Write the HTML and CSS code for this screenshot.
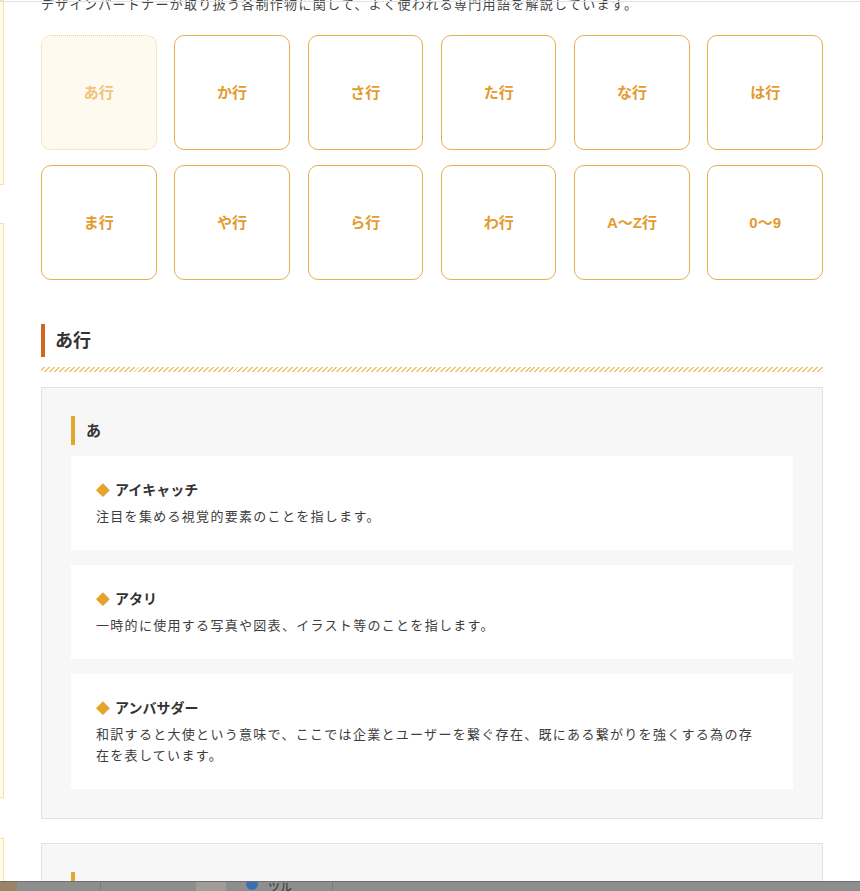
FILE: index.html
```html
<!DOCTYPE html>
<html lang="ja">
<head>
    <meta charset="utf-8">
    <link rel="stylesheet" href="styles.css">
</head>
<body>
    <div class="topline"></div>

    <div class="layout">
        <aside class="side">
            <div class="side-box side-box-1"></div>
            <div class="side-box side-box-2"></div>
            <div class="side-box side-box-3"></div>
        </aside>

        <main class="main">
            <p class="intro">デザインパートナーが取り扱う各制作物に関して、よく使われる専門用語を解説しています。</p>

            <!-- 行ナビ -->
            <nav class="kana-nav">
                <a class="kana-btn current">あ行</a>
                <a class="kana-btn">か行</a>
                <a class="kana-btn">さ行</a>
                <a class="kana-btn">た行</a>
                <a class="kana-btn">な行</a>
                <a class="kana-btn">は行</a>
                <a class="kana-btn">ま行</a>
                <a class="kana-btn">や行</a>
                <a class="kana-btn">ら行</a>
                <a class="kana-btn">わ行</a>
                <a class="kana-btn">A〜Z行</a>
                <a class="kana-btn">0〜9</a>
            </nav>

            <h2 class="row-title">あ行</h2>
            <div class="stripe"></div>

            <section class="term-group">
                <h3 class="group-title">あ</h3>

                <div class="term">
                    <h4 class="term-name"><span class="diamond">◆</span>アイキャッチ</h4>
                    <p class="term-desc">注目を集める視覚的要素のことを指します。</p>
                </div>

                <div class="term">
                    <h4 class="term-name"><span class="diamond">◆</span>アタリ</h4>
                    <p class="term-desc">一時的に使用する写真や図表、イラスト等のことを指します。</p>
                </div>

                <div class="term">
                    <h4 class="term-name"><span class="diamond">◆</span>アンバサダー</h4>
                    <p class="term-desc">和訳すると大使という意味で、ここでは企業とユーザーを繋ぐ存在、既にある繋がりを強くする為の存在を表しています。</p>
                </div>
            </section>

            <section class="term-group">
                <h3 class="group-title">い</h3>
            </section>
        </main>
    </div>

    <!-- 画面下の固定バー -->
    <div class="dock">
        <div class="dock-thumb"></div>
        <div class="dock-item"></div>
        <div class="dock-photo"></div>
        <div class="dock-label"><span class="dock-dot"></span>ツル</div>
        <div class="dock-item wide"></div>
    </div>
</body>
</html>
```

FILE: styles.css
```css
body {
    margin: 0;
    background: #fff;
    color: #444;
    font-family: "Liberation Sans", "Noto Sans CJK JP", sans-serif;
    overflow: hidden;
}

.topline {
    position: fixed;
    top: 1px;
    left: 0;
    right: 0;
    height: 1px;
    background: #e2e2e2;
    z-index: 5;
}

.layout {
    display: flex;
}

.side {
    width: 4px;
    flex-shrink: 0;
    display: flex;
    flex-direction: column;
}

.side-box {
    box-sizing: border-box;
    width: 4px;
    background: #fffbea;
    border: 1px solid #f4e3a6;
    border-left: none;
}

.side-box-1 { height: 185px; }
.side-box-2 { height: 575px; margin-top: 38px; }
.side-box-3 { height: 60px; margin-top: 40px; }

.main {
    width: 782px;
    margin-left: 37px;
    margin-top: -6px;
}

.intro {
    margin: 0;
    font-size: 13px;
    letter-spacing: 0.1em;
    line-height: 21px;
    color: #444;
}

.kana-nav {
    display: grid;
    grid-template-columns: repeat(6, 1fr);
    column-gap: 17.6px;
    row-gap: 15px;
    margin-top: 20px;
}

.kana-btn {
    box-sizing: border-box;
    height: 115px;
    padding-bottom: 3px;
    display: flex;
    align-items: center;
    justify-content: center;
    border: 1px solid #e8b04a;
    border-radius: 10px;
    background: #fff;
    color: #e39b2f;
    font-size: 15px;
    font-weight: bold;
    text-decoration: none;
}

.kana-btn.current {
    border: 1px dotted #f0cf8c;
    background: #fffaef;
    color: #f0c47c;
}

.row-title {
    margin: 44px 0 0;
    border-left: 4px solid #d0691f;
    padding: 2px 0 0 10px;
    font-size: 18px;
    line-height: 31px;
    color: #333;
}

.stripe {
    height: 5px;
    margin-top: 10px;
    background: repeating-linear-gradient(-45deg, #eec46e 0 1.4px, transparent 1.4px 3.5px);
}

.term-group {
    margin-top: 15px;
    background: #f7f7f7;
    border: 1px solid #e2e2e2;
    padding: 28px 29px 29px;
}

.term-group + .term-group {
    margin-top: 24px;
}

.group-title {
    margin: 0;
    border-left: 4px solid #e2a72e;
    padding: 1px 0 0 11px;
    font-size: 15px;
    line-height: 28px;
    color: #333;
}

.term {
    background: #fff;
    padding: 22px 28px 23px 25px;
    margin-top: 11px;
}

.term + .term {
    margin-top: 15px;
}

.term-name {
    margin: 0;
    font-size: 14px;
    line-height: 24px;
    color: #333;
}

.diamond {
    color: #e4a32d;
    margin-right: 5px;
}

.term-desc {
    margin: 4px 0 0;
    font-size: 13px;
    letter-spacing: 0.1em;
    line-height: 21px;
    color: #3d3d3d;
}

.dock {
    position: fixed;
    left: 0;
    right: 0;
    bottom: 0;
    height: 9px;
    display: flex;
    background: #8e8e8e;
    border-top: 1px solid #6f6f6f;
    z-index: 10;
}

.dock-thumb {
    width: 17px;
    background: #9a8466;
}

.dock-item {
    width: 83px;
    border-right: 1px solid #7a7a7a;
}

.dock-item.wide {
    flex: 1;
    border-right: none;
    border-left: 1px solid #7a7a7a;
    margin-left: 40px;
}

.dock-photo {
    width: 30px;
    margin-left: 95px;
    background: #a19d99;
}

.dock-label {
    margin-left: 20px;
    font-size: 12px;
    line-height: 12px;
    height: 9px;
    color: #333;
    overflow: hidden;
}

.dock-dot {
    display: inline-block;
    width: 12px;
    height: 12px;
    border-radius: 50%;
    background: #3c6fb6;
    margin: -4px 10px 0 0;
    vertical-align: top;
}
```
